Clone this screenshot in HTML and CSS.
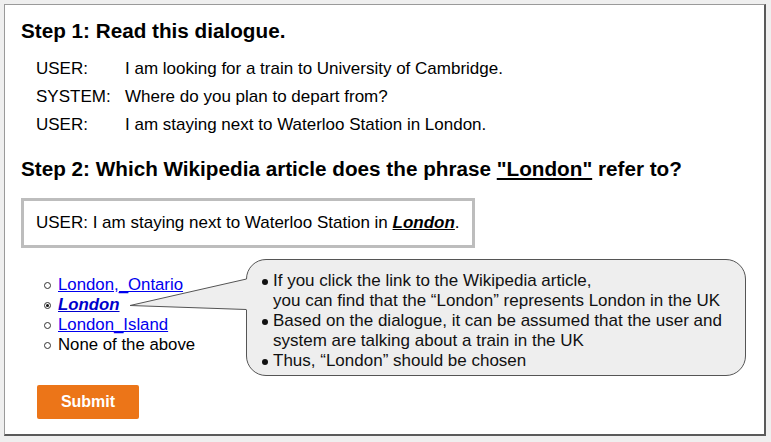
FILE: index.html
```html
<!DOCTYPE html>
<html>
<head>
<meta charset="utf-8">
<link rel="stylesheet" href="styles.css">
</head>
<body>
<div class="frame">
  <h1 class="step">Step 1: Read this dialogue.</h1>
  <div class="dialogue">
    <div class="turn"><span class="spk">USER:</span><span>I am looking for a train to University of Cambridge.</span></div>
    <div class="turn"><span class="spk">SYSTEM:</span><span>Where do you plan to depart from?</span></div>
    <div class="turn"><span class="spk">USER:</span><span>I am staying next to Waterloo Station in London.</span></div>
  </div>
  <h2 class="step step2">Step 2: Which Wikipedia article does the phrase <u>"London"</u> refer to?</h2>
  <div class="utt">USER: I am staying next to Waterloo Station in <b><i><u>London</u></i></b>.</div>
  <div class="answer">
    <ul class="choices">
      <li><span class="radio"></span><a href="#">London,_Ontario</a></li>
      <li><span class="radio on"></span><a href="#" class="sel">London</a></li>
      <li><span class="radio"></span><a href="#">London_Island</a></li>
      <li><span class="radio"></span><span>None of the above</span></li>
    </ul>
    <div class="bubble">
      <svg class="tail" width="122" height="36" viewBox="0 0 122 36">
        <polygon points="2,28.5 118,2 121,2 121,33 118,33" fill="#eeeeee"/>
        <polyline points="118.5,2 2,28.5 118.5,32.5" fill="none" stroke="#555" stroke-width="1"/>
      </svg>
      <ul class="notes">
        <li>If you click the link to the Wikipedia article,<br>you can find that the “London” represents London in the UK</li>
        <li>Based on the dialogue, it can be assumed that the user and<br>system are talking about a train in the UK</li>
        <li>Thus, “London” should be chosen</li>
      </ul>
    </div>
  </div>
  <button class="submit">Submit</button>
</div>
</body>
</html>
```

FILE: styles.css
```css
html, body {
  margin: 0;
  padding: 0;
}
body {
  background: #efefef;
  padding: 4px 0 0 4px;
  font-family: "Liberation Sans", Arial, sans-serif;
  color: #000;
}
.frame {
  box-sizing: border-box;
  width: 762px;
  height: 432px;
  background: #fff;
  border: 1px solid #9a9a9a;
  border-right: 2px solid #5a5a5a;
  border-bottom: 2px solid #5a5a5a;
  padding: 14.5px 0 0 16px;
}
.step {
  margin: 0;
  font-size: 20.7px;
  line-height: 22px;
  font-weight: bold;
}
.dialogue {
  margin-top: 13px;
  padding-left: 15px;
  font-size: 17px;
  line-height: 28px;
}
.turn {
  display: flex;
}
.spk {
  width: 89px;
  flex: 0 0 89px;
}
.step2 {
  margin-top: 19.5px;
}
.utt {
  display: block;
  width: fit-content;
  margin-top: 17.5px;
  border: 3px solid #bdbdbd;
  padding: 12px 12px 12px 12px;
  font-size: 17px;
  line-height: 20px;
}
.answer {
  display: flex;
  align-items: flex-start;
  margin-top: 11px;
}
.choices {
  list-style: none;
  margin: 16px 0 0 0;
  padding: 0 0 0 23px;
  flex: 0 0 225px;
  box-sizing: border-box;
  font-size: 16.8px;
  line-height: 20px;
}
.choices li {
  display: flex;
  align-items: center;
}
.radio {
  box-sizing: border-box;
  width: 7px;
  height: 7px;
  border: 1px solid #333;
  border-radius: 50%;
  margin: 1px 7px 0 0;
  position: relative;
}
.radio.on::after {
  content: "";
  position: absolute;
  left: 1px;
  top: 1px;
  width: 3px;
  height: 3px;
  border-radius: 50%;
  background: #111;
}
.choices a {
  color: #0000ee;
  text-decoration: underline;
}
.choices a.sel {
  font-weight: bold;
  font-style: italic;
  color: #0000cc;
}
.bubble {
  position: relative;
  box-sizing: border-box;
  width: 500px;
  height: 117px;
  background: #eeeeee;
  border: 1px solid #555;
  border-radius: 20px;
  padding: 11.5px 10px 0 15px;
}
.tail {
  position: absolute;
  left: -119px;
  top: 17px;
  display: block;
}
.notes {
  list-style: none;
  margin: 0;
  padding: 0;
  font-size: 17px;
  line-height: 20px;
  color: #111;
}
.notes li {
  position: relative;
  padding-left: 11px;
}
.notes li::before {
  content: "";
  position: absolute;
  left: 0;
  top: 8px;
  width: 6px;
  height: 6px;
  border-radius: 50%;
  background: #111;
}
.submit {
  display: block;
  margin: 9px 0 0 16px;
  width: 102px;
  height: 34px;
  border: none;
  border-radius: 2px;
  background: #ec7518;
  color: #fff;
  font-family: "Liberation Sans", Arial, sans-serif;
  font-weight: bold;
  font-size: 16px;
  padding: 0;
}
```
